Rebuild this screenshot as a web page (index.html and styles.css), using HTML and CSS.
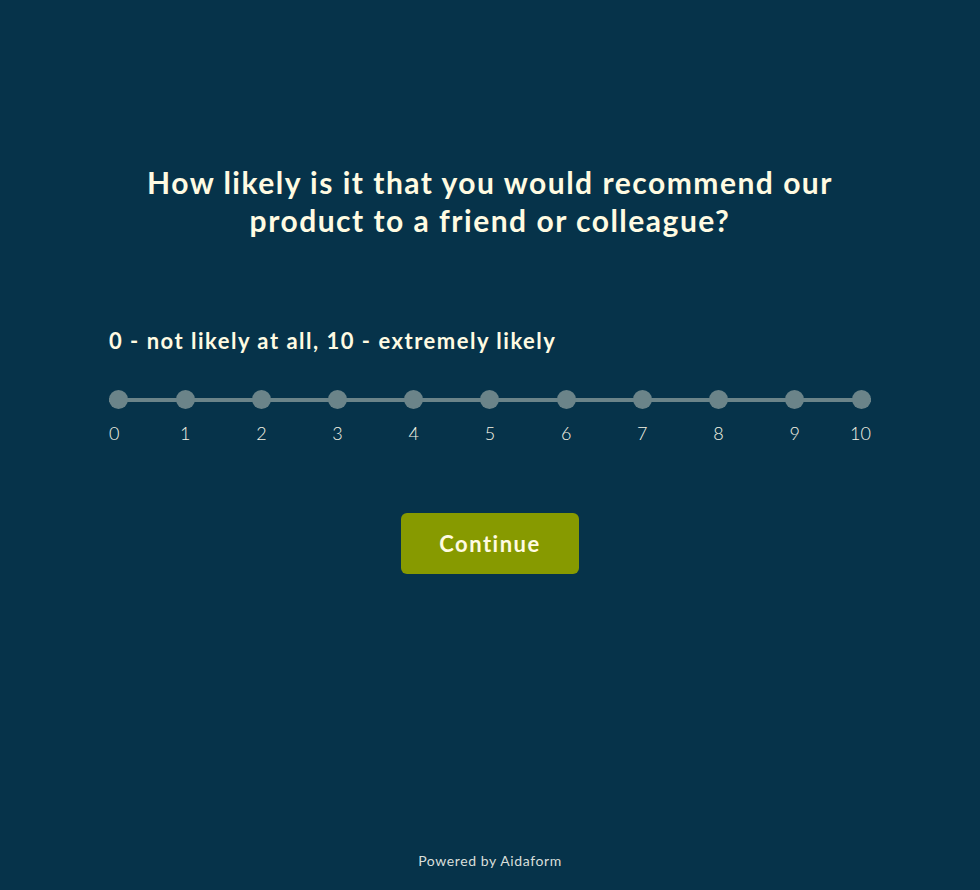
FILE: index.html
```html
<!DOCTYPE html>
<html lang="en">
<head>
    <meta charset="UTF-8">
    <meta name="viewport" content="width=device-width, initial-scale=1.0">
    <title>NPS survey</title>
    <link rel="stylesheet" href="styles.css">
</head>
<body>
    <div class="main">
        <h1 class="question">How likely is it that you would recommend our product to a friend or colleague?</h1>

        <div class="scale">
            <div class="hint">0 - not likely at all, 10 - extremely likely</div>
            <div class="track">
                <div class="tick first"><span class="dot"></span><span class="num">0</span></div>
                <div class="tick"><span class="dot"></span><span class="num">1</span></div>
                <div class="tick"><span class="dot"></span><span class="num">2</span></div>
                <div class="tick"><span class="dot"></span><span class="num">3</span></div>
                <div class="tick"><span class="dot"></span><span class="num">4</span></div>
                <div class="tick"><span class="dot"></span><span class="num">5</span></div>
                <div class="tick"><span class="dot"></span><span class="num">6</span></div>
                <div class="tick"><span class="dot"></span><span class="num">7</span></div>
                <div class="tick"><span class="dot"></span><span class="num">8</span></div>
                <div class="tick"><span class="dot"></span><span class="num">9</span></div>
                <div class="tick last"><span class="dot"></span><span class="num">10</span></div>
            </div>
        </div>

        <div class="actions">
            <button class="continue">Continue</button>
        </div>
    </div>

    <div class="footer">Powered by Aidaform</div>
</body>
</html>
```

FILE: styles.css
```css
body {
    margin: 0;
    padding: 0;
    min-height: 100vh;
    display: flex;
    flex-direction: column;
    background: #06334a;
    color: #fffbe2;
    font-family: "Lato", "Open Sans", sans-serif;
}

.main {
    width: 762px;
    margin: 0 auto;
    padding-top: 163px;
}

.question {
    margin: 0 auto;
    width: 740px;
    text-align: center;
    font-size: 30px;
    line-height: 38px;
    font-weight: 700;
    letter-spacing: 1.5px;
}

.scale {
    margin-top: 88px;
}

.hint {
    font-size: 22px;
    line-height: 28px;
    font-weight: 700;
    letter-spacing: 1.5px;
}

/* line runs behind the dots */
.track {
    margin-top: 35px;
    display: flex;
    justify-content: space-between;
    background: linear-gradient(#6b8489, #6b8489) no-repeat 0 8px / 100% 4px;
}

.tick {
    width: 0;
    display: flex;
    flex-direction: column;
    align-items: center;
}

.tick.first {
    align-items: flex-start;
}

.tick.last {
    align-items: flex-end;
}

.dot {
    width: 19px;
    height: 19px;
    flex-shrink: 0;
    border-radius: 50%;
    background: #6b8489;
}

.num {
    margin-top: 13px;
    font-size: 18px;
    line-height: 22px;
    font-weight: 300;
    color: #f6f4e4;
}

.actions {
    margin-top: 69px;
    text-align: center;
}

.continue {
    width: 178px;
    height: 61px;
    border: none;
    border-radius: 6px;
    background: #879a00;
    color: #fffbe2;
    font-family: inherit;
    font-size: 22px;
    font-weight: 700;
    letter-spacing: 1.5px;
    cursor: pointer;
}

.footer {
    margin-top: auto;
    padding-bottom: 19px;
    text-align: center;
    font-size: 14px;
    line-height: 20px;
    font-weight: 400;
    letter-spacing: 0.6px;
    color: #d9dfda;
}
```
